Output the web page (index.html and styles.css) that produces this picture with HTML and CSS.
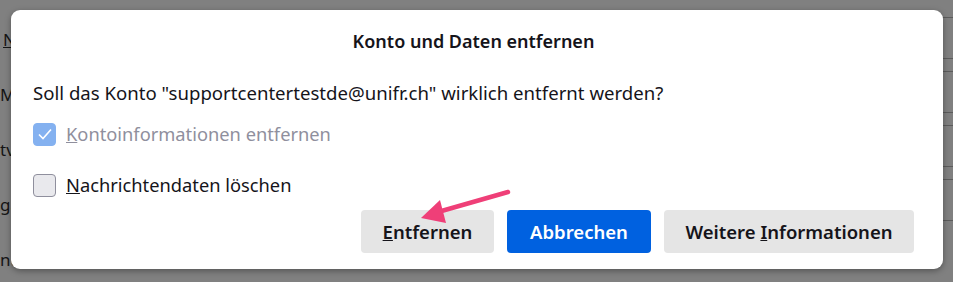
FILE: index.html
```html
<!DOCTYPE html>
<html lang="de">

<head>
    <meta charset="UTF-8">
    <meta name="viewport" content="width=device-width, initial-scale=1.0">
    <title>Konto und Daten entfernen</title>
    <link rel="stylesheet" href="styles.css">
</head>

<body>
    <!-- window behind the dialog -->
    <div class="behind">
        <div class="behind-left">
            <span class="row-text first"><u>N</u>a</span>
            <span class="row-text">Ma</span>
            <span class="row-text">tv</span>
            <span class="row-text">ga</span>
            <span class="row-text">nu</span>
        </div>
        <div class="behind-right">
            <div class="line-row"></div>
            <div class="line-row"></div>
            <div class="line-row"></div>
            <div class="line-row"></div>
        </div>
    </div>

    <div class="dialog">
        <h1 class="dialog-title">Konto und Daten entfernen</h1>
        <p class="dialog-text">Soll das Konto "supportcentertestde@unifr.ch" wirklich entfernt werden?</p>

        <label class="check disabled">
            <span class="box checked">
                <svg width="16" height="16" viewBox="0 0 16 16">
                    <path d="M2 8.5 L6 12.5 L14 3.5" fill="none" stroke="#fff" stroke-width="1.6" />
                </svg>
            </span>
            <span><u>K</u>ontoinformationen entfernen</span>
        </label>

        <label class="check">
            <span class="box"></span>
            <span><u>N</u>achrichtendaten löschen</span>
        </label>

        <div class="buttons">
            <button class="btn btn-remove"><u>E</u>ntfernen</button>
            <button class="btn btn-primary">Abbrechen</button>
            <button class="btn btn-more">Weitere <u>I</u>nformationen</button>
        </div>
    </div>

    <!-- annotation arrow -->
    <svg class="arrow" width="953" height="282" viewBox="0 0 953 282">
        <line x1="508" y1="192" x2="438" y2="212" stroke="#ef3f78" stroke-width="4.5" stroke-linecap="round" />
        <polygon points="421,218 440,200 446,223" fill="#ef3f78" />
    </svg>
</body>

</html>
```

FILE: styles.css
```css
body {
    margin: 0;
    width: 953px;
    height: 282px;
    overflow: hidden;
    position: relative;
    background: #808080;
    font-family: "Noto Sans", "Open Sans", sans-serif;
    color: #15141a;
}

/* background window */
.behind {
    display: flex;
    justify-content: space-between;
    height: 100%;
}

.behind-left {
    display: flex;
    flex-direction: column;
    padding-top: 29px;
    gap: 34px;
    font-size: 17px;
    line-height: 21px;
    color: #151515;
}

.row-text {
    white-space: nowrap;
}

.row-text.first {
    margin-left: 3px;
}

.behind-right {
    width: 10px;
    padding-top: 17px;
}

.line-row {
    height: 40px;
    border-top: 1px solid #5c5c5c;
    border-bottom: 1px solid #5c5c5c;
    margin-bottom: 12px;
}

/* dialog */
.dialog {
    position: absolute;
    top: 10px;
    left: 11px;
    width: 932px;
    height: 259px;
    box-sizing: border-box;
    background: #fff;
    border-radius: 9px;
    box-shadow: 0 2px 6px rgba(0, 0, 0, 0.35);
    padding: 0 29px 0 22px;
}

.dialog-title {
    margin: 20px 0 0;
    font-size: 18px;
    font-weight: 600;
    line-height: 22px;
    text-align: center;
}

.dialog-text {
    margin: 29px 0 0;
    font-size: 18.6px;
    line-height: 24px;
}

.check {
    display: flex;
    align-items: center;
    gap: 10px;
    font-size: 18.3px;
    line-height: 24px;
    margin-top: 17px;
}

.check + .check {
    margin-top: 27px;
}

.check.disabled {
    color: #8f8f9d;
}

.box {
    width: 23px;
    height: 23px;
    box-sizing: border-box;
    border: 1px solid #8f8f9d;
    border-radius: 4px;
    background: #e9e9ed;
    display: flex;
    align-items: center;
    justify-content: center;
}

.box.checked {
    background: #84b1f0;
    border-color: #84b1f0;
}

.buttons {
    display: flex;
    justify-content: flex-end;
    gap: 13px;
    margin-top: 13px;
}

.btn {
    height: 43px;
    border: none;
    border-radius: 4px;
    background: #e5e5e5;
    color: #15141a;
    font-family: inherit;
    font-size: 18.5px;
    font-weight: 600;
    padding: 0;
}

.btn-remove {
    width: 133px;
}

.btn-primary {
    width: 144px;
    background: #0061e0;
    color: #fff;
}

.btn-more {
    width: 250px;
}

.arrow {
    position: absolute;
    top: 0;
    left: 0;
    pointer-events: none;
}
```
